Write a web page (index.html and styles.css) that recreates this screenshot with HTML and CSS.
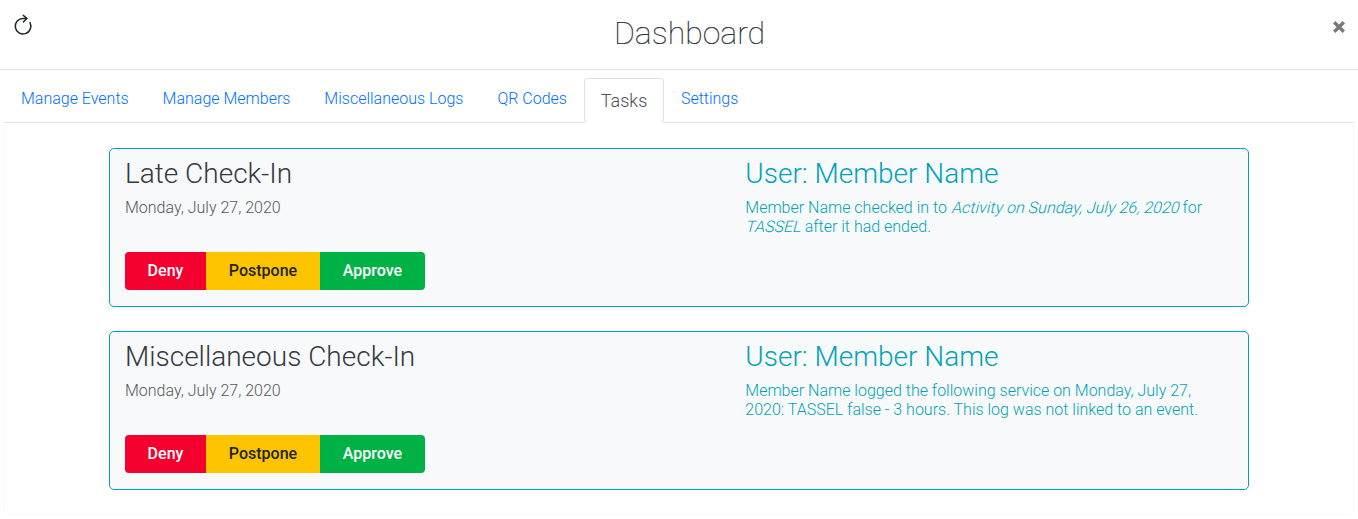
FILE: index.html
```html
<!DOCTYPE html>
<html lang="en">
<head>
<meta charset="utf-8">
<title>Dashboard</title>
<link rel="stylesheet" href="styles.css">
</head>
<body>
<header class="header">
  <button class="refresh" aria-label="Refresh"><svg width="20" height="22" viewBox="0 0 20 22" fill="none" stroke="#212529" stroke-width="1.5" stroke-linecap="round"><path d="M17 8.6A7.8 7.8 0 1 1 10.2 4.4H13.6"/><path d="M10.2 1.2L13.8 4.4L10.4 8"/></svg></button>
  <h1 class="title">Dashboard</h1>
  <button class="close" aria-label="Close"><svg width="12" height="12" viewBox="0 0 12 12" stroke="#7a7a7a" stroke-width="3.4"><path d="M1.2 1.2L10.8 10.8M10.8 1.2L1.2 10.8"/></svg></button>
</header>
<nav class="tabs">
  <a class="tab">Manage Events</a><a class="tab">Manage Members</a><a class="tab">Miscellaneous Logs</a><a class="tab">QR Codes</a><a class="tab active">Tasks</a><a class="tab">Settings</a>
</nav>
<main class="panel">
  <section class="card">
    <div class="info">
      <h2 class="heading">Late Check-In</h2>
      <p class="text">Monday, July 27, 2020</p>
      <div class="buttons"><button class="btn deny">Deny</button><button class="btn postpone">Postpone</button><button class="btn approve">Approve</button></div>
    </div>
    <div class="user">
      <h2 class="heading">User: Member Name</h2>
      <p class="text">Member Name checked in to <em class="slant">Activity on Sunday, July 26, 2020</em> for <em class="slant">TASSEL</em> after it had ended.</p>
    </div>
  </section>
  <section class="card">
    <div class="info">
      <h2 class="heading">Miscellaneous Check-In</h2>
      <p class="text">Monday, July 27, 2020</p>
      <div class="buttons"><button class="btn deny">Deny</button><button class="btn postpone">Postpone</button><button class="btn approve">Approve</button></div>
    </div>
    <div class="user">
      <h2 class="heading">User: Member Name</h2>
      <p class="text">Member Name logged the following service on Monday, July 27, 2020: TASSEL false - 3 hours. This log was not linked to an event.</p>
    </div>
  </section>
</main>
</body>
</html>
```
FILE: styles.css
```css
* { box-sizing: border-box; }
body { margin: 0; background: #fff; font: 300 16px/19.2px Roboto, sans-serif; color: #343a40; overflow: hidden; }
h1, h2, p { margin: 0; font-weight: 300; }
button { border: 0; padding: 0; font-family: inherit; background: none; }
.header { height: 70px; border-bottom: 1px solid #dee2e6; display: grid; grid-template-columns: 100px 1fr 79px; padding: 14px 13px 0 13px; align-items: start; }
.refresh { justify-self: start; height: 22px; }
.refresh svg, .close svg { display: block; }
.title { text-align: center; font-size: 32px; line-height: 39px; font-weight: 100; color: #212529; -webkit-text-stroke: 0.2px #343a40; }
.close { justify-self: end; margin-top: 7px; }
.tabs { display: flex; height: 53px; margin: 0 4px; padding-top: 8px; border-bottom: 1px solid #dee2e6; }
.tab { height: 45px; padding: 10px 15.95px 0 16px; border: 1px solid transparent; color: #006fff; }
.active { padding-top: 11px; padding-right: 15.6px; background: #fff; color: #495057; font-size: 18px; line-height: 22px; border-color: #dee2e6 #dee2e6 #fff; border-radius: 4px; }
.panel { margin: 0 4px; height: 392px; padding: 25px 104px 0; border: 1px solid #f8f9fa; border-radius: 5px; border-top: 0; display: flex; flex-direction: column; gap: 24px; }
.card { height: 159px; background: #f8f9fb; border: 1px solid #00a3b8; border-radius: 5px; display: grid; grid-template-columns: 620.3px 470px; padding: 8px 15px 0; }
.heading { font-size: 28px; line-height: 33px; margin-bottom: 8px; }
.info .text { color: #55595d; }
.user { color: #00a3b8; }
.slant { display: inline-block; font-style: normal; transform: skewX(-14deg); transform-origin: 0 15px; }
.buttons { display: flex; margin-top: 35px; width: 300px; border-radius: 4px; overflow: hidden; }
.btn { height: 38px; padding-bottom: 2px; font-size: 16px; font-weight: 500; color: #fff; }
.deny { width: 81px; background: #f3002f; }
.postpone { width: 114px; background: #ffc400; color: #212529; }
.approve { width: 105px; background: #00b246; }
```
